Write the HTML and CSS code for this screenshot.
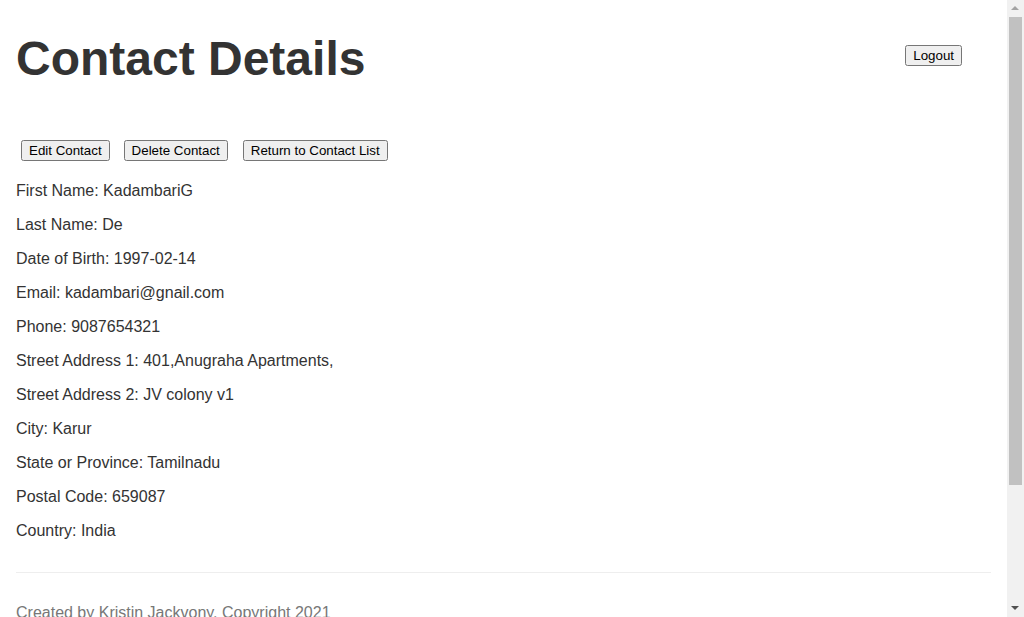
FILE: index.html
```html
<!DOCTYPE html>
<html lang="en">
<head>
<meta charset="utf-8">
<title>Contact Details</title>
<link rel="stylesheet" href="styles.css">
</head>
<body>
<div class="page">
  <header class="header">
    <h1 class="title">Contact Details</h1>
    <button class="btn logout" type="button">Logout</button>
  </header>
  <div class="actions">
    <button class="btn" type="button">Edit Contact</button>
    <button class="btn" type="button">Delete Contact</button>
    <button class="btn btn-return" type="button">Return to Contact List</button>
  </div>
  <div class="details">
    <p class="row">First Name: KadambariG</p>
    <p class="row">Last Name: De</p>
    <p class="row">Date of Birth: 1997-02-14</p>
    <p class="row">Email: kadambari@gnail.com</p>
    <p class="row">Phone: 9087654321</p>
    <p class="row">Street Address 1: 401,Anugraha Apartments,</p>
    <p class="row">Street Address 2: JV colony v1</p>
    <p class="row">City: Karur</p>
    <p class="row">State or Province: Tamilnadu</p>
    <p class="row">Postal Code: 659087</p>
    <p class="row">Country: India</p>
  </div>
  <footer class="footer">
    <p class="copyright">Created by Kristin Jackvony, Copyright 2021</p>
  </footer>
</div>
<div class="scrollbar" aria-hidden="true">
  <div class="sb-arrow sb-up"></div>
  <div class="sb-track"><div class="sb-thumb"></div></div>
  <div class="sb-arrow sb-down"></div>
</div>
</body>
</html>
```
FILE: styles.css
```css
html, body {
  margin: 0;
  padding: 0;
}
body {
  font-family: "Liberation Sans", Arial, Helvetica, sans-serif;
  font-size: 16px;
  color: #333;
  background: #fff;
  margin-right: 17px;
}
.page {
  padding: 32px 16px 140px;
}
.header {
  display: flex;
  justify-content: space-between;
  align-items: center;
}
.title {
  margin: 0;
  font-size: 48px;
  line-height: 53px;
  font-weight: bold;
}
.btn {
  font-family: "Liberation Sans", Arial, sans-serif;
  font-size: 13.333px;
}
.logout {
  margin-right: 29px;
  margin-top: -7px;
}
.actions {
  display: flex;
  gap: 14px;
  margin: 55px 0 0 5px;
}
.btn-return {
  margin-left: 1px;
}
.details {
  display: flex;
  flex-direction: column;
  gap: 16px;
  margin-top: 21px;
}
.row {
  margin: 0;
  line-height: 18px;
}
.footer {
  margin-top: 32px;
  border-top: 1px solid #eee;
  padding-top: 31px;
}
.copyright {
  margin: 0;
  line-height: 18px;
  color: #777;
}

/* emulated browser scrollbar */
.scrollbar {
  position: fixed;
  top: 0;
  right: 0;
  width: 17px;
  height: 100vh;
  background: #f1f1f1;
  display: flex;
  flex-direction: column;
}
.sb-arrow {
  height: 17px;
  flex: none;
  position: relative;
}
.sb-arrow::after {
  content: "";
  position: absolute;
  left: 4px;
  width: 0;
  height: 0;
  border-left: 4px solid transparent;
  border-right: 4px solid transparent;
}
.sb-up::after {
  top: 6px;
  border-bottom: 4px solid #a3a3a3;
}
.sb-down::after {
  top: 6px;
  border-top: 4px solid #505050;
}
.sb-track {
  flex: 1;
  padding: 0 2px;
}
.sb-thumb {
  height: 468px;
  background: #c1c1c1;
}
```
